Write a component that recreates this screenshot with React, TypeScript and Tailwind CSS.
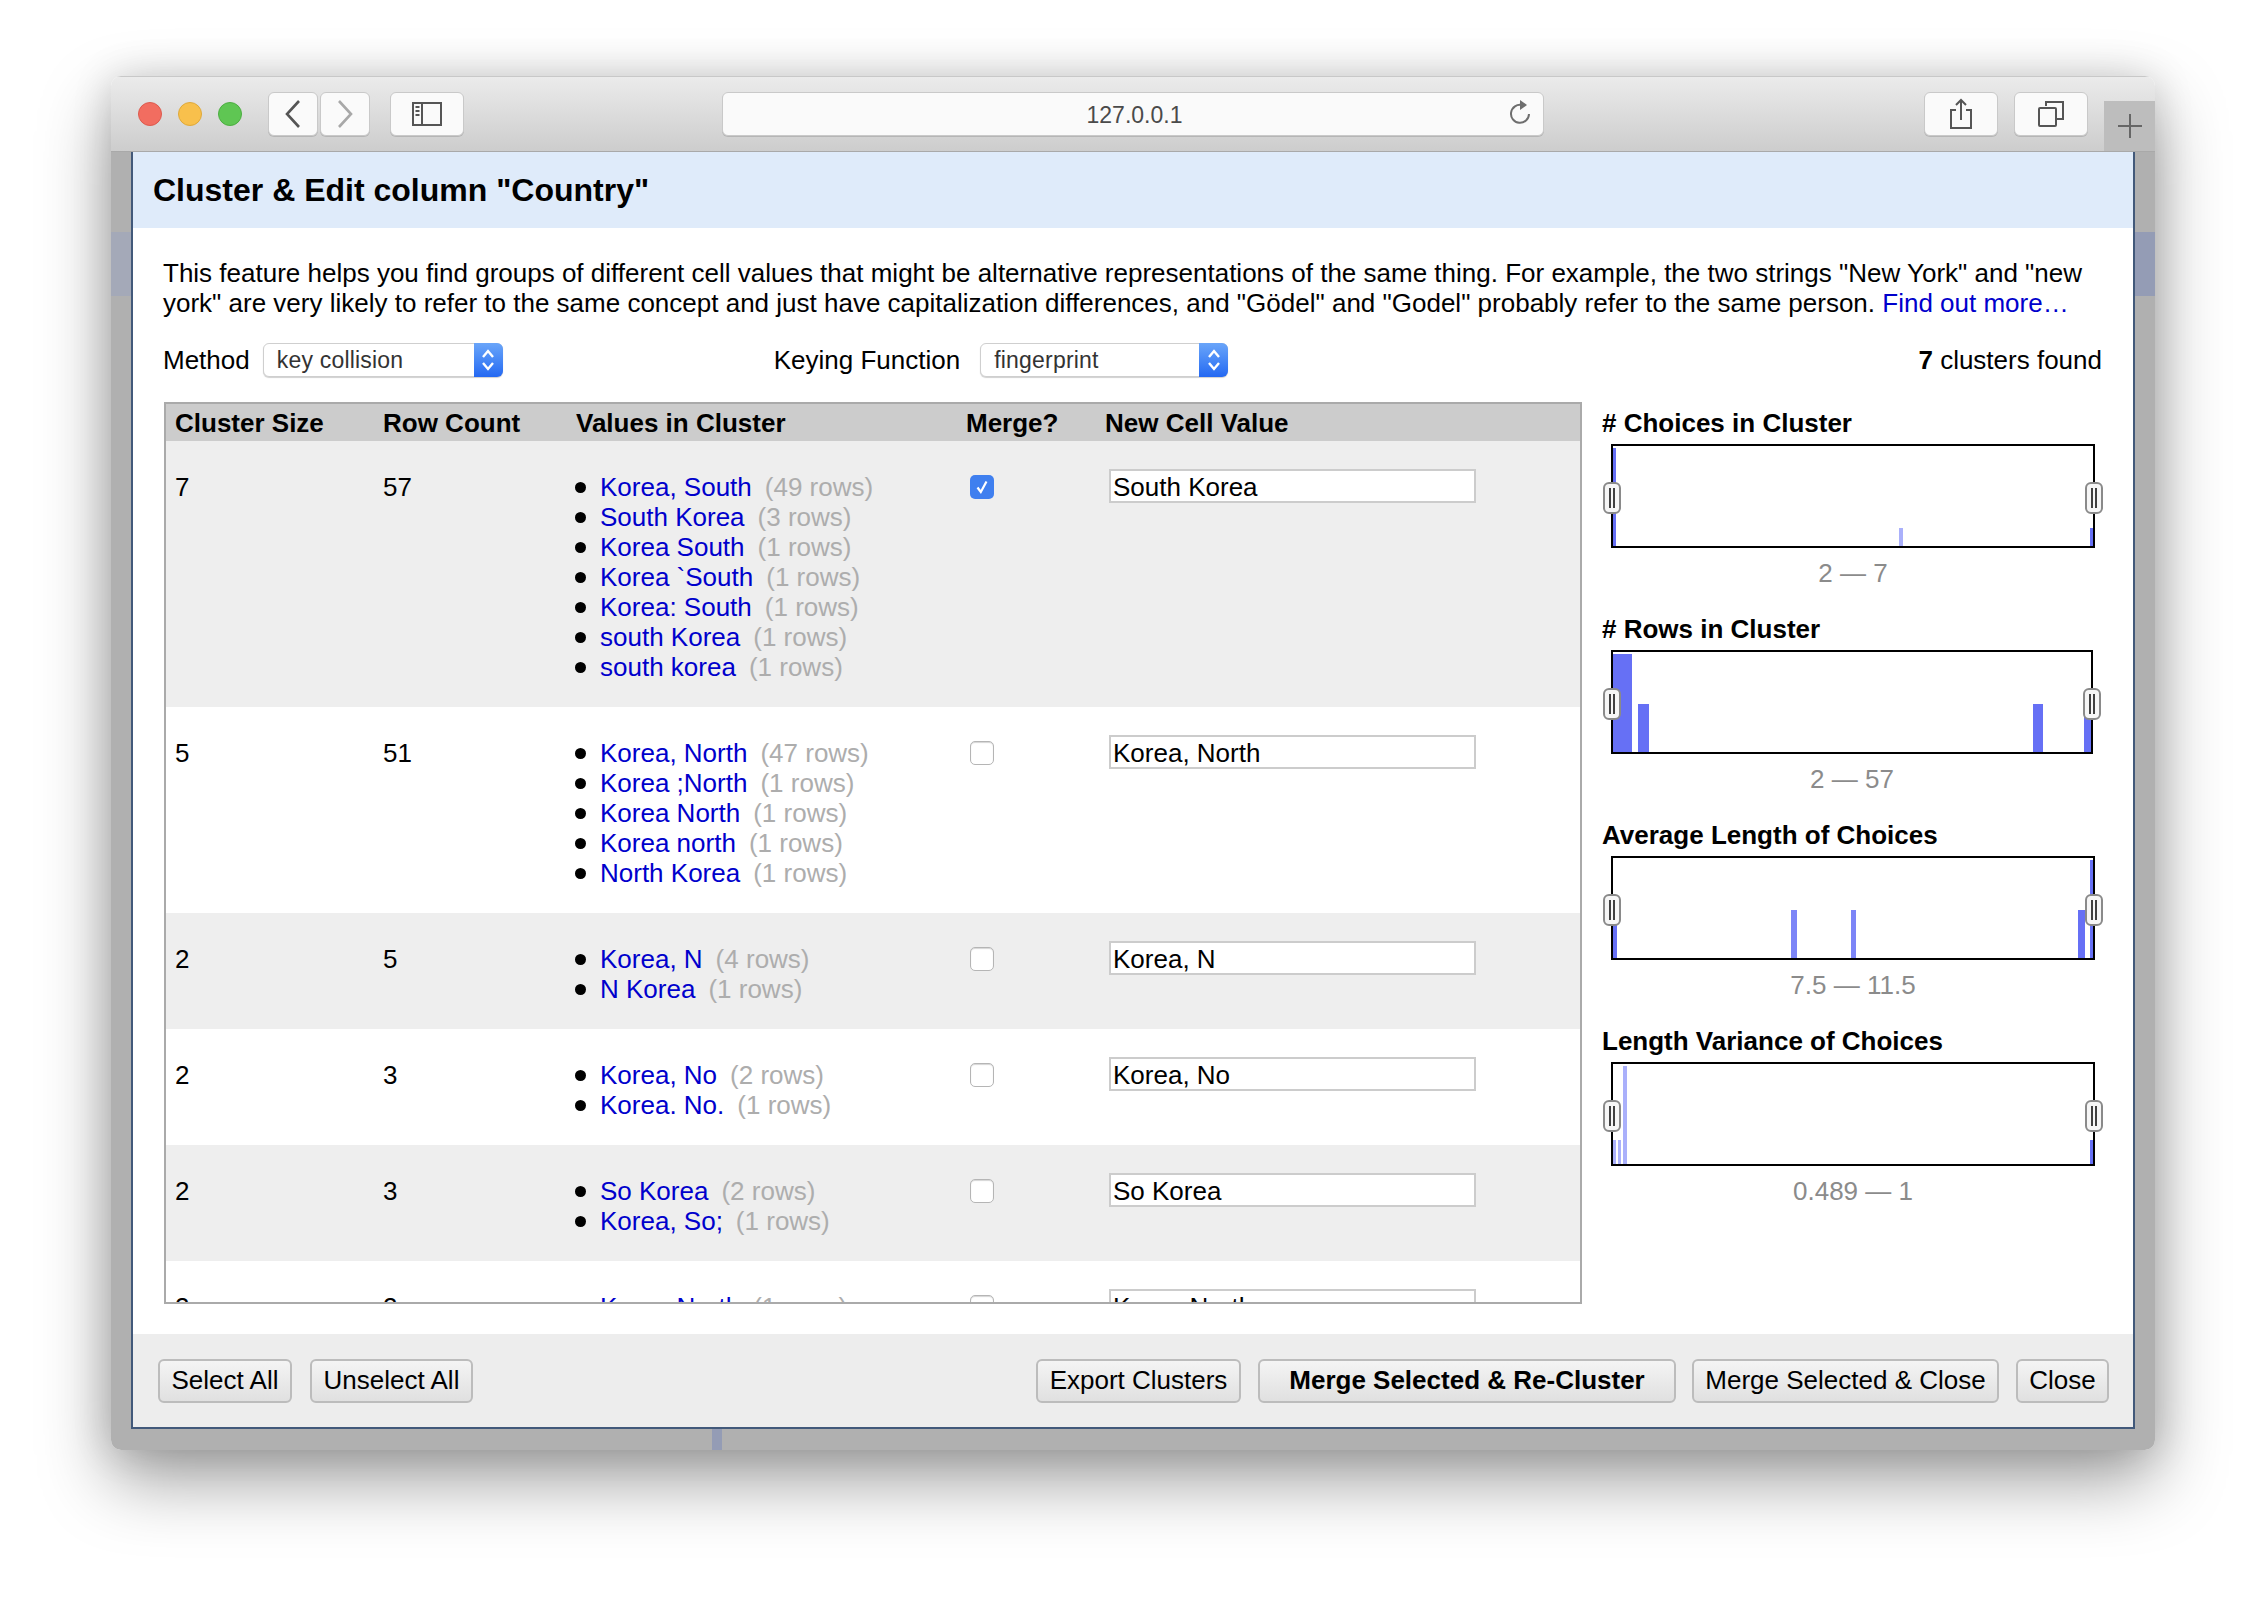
import React from 'react';

const FONT = { fontFamily: '"Liberation Sans", Arial, sans-serif' };

const clusters = [
  {
    size: 7, rows: 57, checked: true, value: 'South Korea',
    items: [['Korea, South', 49], ['South Korea', 3], ['Korea South', 1], ['Korea `South', 1], ['Korea: South', 1], ['south Korea', 1], ['south korea', 1]],
  },
  {
    size: 5, rows: 51, checked: false, value: 'Korea, North',
    items: [['Korea, North', 47], ['Korea ;North', 1], ['Korea North', 1], ['Korea north', 1], ['North Korea', 1]],
  },
  { size: 2, rows: 5, checked: false, value: 'Korea, N', items: [['Korea, N', 4], ['N Korea', 1]] },
  { size: 2, rows: 3, checked: false, value: 'Korea, No', items: [['Korea, No', 2], ['Korea. No.', 1]] },
  { size: 2, rows: 3, checked: false, value: 'So Korea', items: [['So Korea', 2], ['Korea, So;', 1]] },
  { size: 2, rows: 2, checked: false, value: 'Korea North', items: [['Korea North', 1], ['Korea, North.', 1]] },
];

// [x, y, w, h, colour] in the inner box coordinates of a chart
const DARK = '#6670f5';
const MID = '#7c85f7';
const LIGHT = '#aab0fb';

const charts = [
  { title: '# Choices in Cluster', range: '2 — 7', width: 484, bars: [[0, 2, 3, 98, DARK], [286, 82, 4, 18, LIGHT], [477, 82, 3, 18, DARK]] },
  { title: '# Rows in Cluster', range: '2 — 57', width: 482, bars: [[0, 2, 19, 98, DARK], [25, 52, 11, 48, DARK], [420, 52, 10, 48, DARK], [471, 52, 7, 48, DARK]] },
  { title: 'Average Length of Choices', range: '7.5 — 11.5', width: 484, bars: [[0, 52, 4, 48, DARK], [178, 52, 6, 48, MID], [238, 52, 5, 48, MID], [465, 52, 7, 48, DARK], [477, 2, 3, 98, DARK]] },
  { title: 'Length Variance of Choices', range: '0.489 — 1', width: 484, bars: [[0, 76, 3, 24, LIGHT], [5, 76, 3, 24, LIGHT], [10, 2, 4, 98, LIGHT], [477, 76, 3, 24, DARK]] },
];

const ToolButton = ({ className, children }: { className: string; children?: React.ReactNode }) => (
  <div className={`h-[44px] flex items-center justify-center rounded-[6px] bg-[#fafafa] border border-[#c9c9c9] shadow-[0_1px_0_#b5b5b5] ${className}`}>
    {children}
  </div>
);

const Handle = ({ className }: { className: string }) => (
  <div className={`absolute top-[36px] w-[18px] h-[32px] rounded-[6px] border-2 border-[#8a8a8a] bg-[#f6f6f6] flex items-center justify-center gap-[2px] ${className}`}>
    <div className="w-[2px] h-[20px] bg-[#404040]" />
    <div className="w-[2px] h-[20px] bg-[#404040]" />
  </div>
);

const Chart = ({ title, range, width, bars }: (typeof charts)[number]) => (
  <div className="h-[206px] pt-[6px]">
    <div className="h-[30px] leading-[30px] text-[26px] font-bold text-black whitespace-nowrap">{title}</div>
    <div className="relative mt-[6px] ml-[9px] h-[104px] border-2 border-black bg-white" style={{ width }}>
      <svg width={width - 4} height={100} className="block">
        {bars.map(([x, y, w, h, c], i) => (
          <rect key={i} x={x as number} y={y as number} width={w as number} height={h as number} fill={c as string} />
        ))}
      </svg>
      <Handle className="-left-[10px]" />
      <Handle className="-right-[10px]" />
    </div>
    <div className="mt-[10px] ml-[9px] text-center text-[26px] leading-[30px] text-[#8b8b8b]" style={{ width }}>{range}</div>
  </div>
);

const SelectBox = ({ label, className }: { label: string; className: string }) => (
  <div className={`h-[34px] flex items-stretch rounded-[6px] bg-white border border-[#cfcfcf] shadow-[0_1px_1px_#d0d0d0] ${className}`}>
    <div className="flex-1 pl-[13px] text-[23px] leading-[32px] text-[#333333] tracking-[0.2px]">{label}</div>
    <div className="w-[29px] -my-px -mr-px rounded-r-[6px] bg-gradient-to-b from-[#6aa5f9] to-[#2468f2] flex items-center justify-center">
      <svg width="14" height="26" viewBox="0 0 14 26" fill="none" stroke="white" strokeWidth="2.4">
        <path d="M2 10 L7 4 L12 10" />
        <path d="M2 16 L7 22 L12 16" />
      </svg>
    </div>
  </div>
);

const FooterButton = ({ label, className }: { label: string; className: string }) => (
  <div className={`h-[44px] flex items-center justify-center rounded-[6px] border-2 border-[#bcbcbc] bg-gradient-to-b from-[#f4f4f4] to-[#e0e0e0] text-[26px] text-black whitespace-nowrap ${className}`}>
    {label}
  </div>
);

const CheckBox = ({ checked }: { checked: boolean }) =>
  checked ? (
    <div className="w-[24px] h-[24px] rounded-[5px] bg-[#3f7fef] flex items-center justify-center">
      <svg width="16" height="16" viewBox="0 0 16 16" fill="none" stroke="white" strokeWidth="2.2">
        <path d="M3.5 8.5 L6.8 13 L12.5 2.5" />
      </svg>
    </div>
  ) : (
    <div className="w-[24px] h-[24px] rounded-[5px] bg-white border border-[#b5b5b5] shadow-[inset_0_1px_1px_#d5d5d5]" />
  );

export default function App() {
  return (
    <div className="w-[2266px] h-[1598px] bg-white pl-[111px] pt-[76px] overflow-hidden" style={FONT}>
      <div className="relative w-[2044px] h-[1374px] flex flex-col rounded-[10px] overflow-hidden shadow-[0_30px_70px_rgba(0,0,0,0.38),0_0_40px_rgba(0,0,0,0.14)]">
        {/* Safari toolbar */}
        <div className="relative h-[76px] shrink-0 flex items-center pl-[27px] bg-gradient-to-b from-[#ebebeb] to-[#cdcdcd] border-t border-[#c8c8c8] border-b border-b-[#a9a9a9]">
          <div className="w-[24px] h-[24px] rounded-full bg-[#f26d60] border border-[#dd5a4e]" />
          <div className="ml-[16px] w-[24px] h-[24px] rounded-full bg-[#f8c04c] border border-[#dfa93a]" />
          <div className="ml-[16px] w-[24px] h-[24px] rounded-full bg-[#5fc653] border border-[#4cae41]" />
          <ToolButton className="ml-[26px] w-[50px]">
            <svg width="18" height="32" viewBox="0 0 18 32" fill="none" stroke="#555" strokeWidth="2.6"><path d="M15 3 L3 16 L15 29" /></svg>
          </ToolButton>
          <ToolButton className="ml-[2px] w-[50px]">
            <svg width="18" height="32" viewBox="0 0 18 32" fill="none" stroke="#a8a8a8" strokeWidth="2.6"><path d="M3 3 L15 16 L3 29" /></svg>
          </ToolButton>
          <ToolButton className="ml-[20px] w-[74px]">
            <svg width="30" height="24" viewBox="0 0 30 24" fill="none" stroke="#555" strokeWidth="2">
              <rect x="1" y="1" width="28" height="22" />
              <path d="M10 1 V23" />
              <path d="M3.5 5 H7.5 M3.5 9 H7.5 M3.5 13 H7.5" />
            </svg>
          </ToolButton>
          <div className="relative ml-[258px] w-[822px] h-[44px] rounded-[6px] bg-[#fafafa] border border-[#c9c9c9] shadow-[0_1px_0_#b5b5b5] flex items-center justify-center pl-[3px] pt-[2px] text-[23px] text-[#4a4a4a]">
            127.0.0.1
            <svg className="absolute right-[11px] top-[6px]" width="24" height="28" viewBox="0 0 24 28" fill="none" stroke="#6e6e6e" strokeWidth="2">
              <path d="M14 6 A9 9 0 1 0 21 15" />
              <path d="M12 1 L19 6 L12 11 Z" fill="#6e6e6e" stroke="none" />
            </svg>
          </div>
          <ToolButton className="ml-[380px] w-[74px]">
            <svg width="24" height="32" viewBox="0 0 24 32" fill="none" stroke="#555" strokeWidth="2">
              <path d="M7 12 H2 V30 H22 V12 H17" />
              <path d="M12 22 V2 M7 7 L12 2 L17 7" />
            </svg>
          </ToolButton>
          <ToolButton className="ml-[16px] w-[74px]">
            <svg width="26" height="26" viewBox="0 0 26 26" fill="none" stroke="#555" strokeWidth="2">
              <path d="M8 5 V1 H25 V18 H19" />
              <rect x="1" y="7" width="17" height="18" rx="1" />
            </svg>
          </ToolButton>
          <div className="absolute right-0 bottom-0 w-[51px] h-[50px] bg-[#bdbdbd] flex items-center justify-center">
            <svg width="24" height="24" viewBox="0 0 24 24" stroke="#666" strokeWidth="2"><path d="M12 0 V24 M0 12 H24" /></svg>
          </div>
        </div>

        {/* page behind the dialog */}
        <div className="relative flex-1 min-h-0 bg-[#b0b0b0] pl-[20px] pr-[20px] pb-[21px] flex">
          <div className="absolute left-0 top-[80px] w-[20px] h-[64px] bg-[#a4a9b8]" />
          <div className="absolute right-0 top-[80px] w-[20px] h-[64px] bg-[#949cb5]" />
          <div className="absolute left-[601px] bottom-0 w-[10px] h-[21px] bg-[#949cb5]" />

          {/* Cluster dialog */}
          <div className="relative flex-1 min-w-0 flex flex-col bg-white border-x-2 border-b-2 border-[#42597a]">
            <div className="h-[76px] shrink-0 bg-[#dfebfa] pl-[20px] flex items-center text-[32px] font-bold text-black">
              Cluster &amp; Edit column "Country"
            </div>

            <div className="flex-1 min-h-0 flex flex-col pt-[30px] pl-[30px] pr-[31px]">
              <p className="text-[26px] leading-[30px] text-black whitespace-nowrap">
                This feature helps you find groups of different cell values that might be alternative representations of the same thing. For example, the two strings "New York" and "new
                <br />
                york" are very likely to refer to the same concept and just have capitalization differences, and "Gödel" and "Godel" probably refer to the same person.{' '}
                <span className="text-[#0000cc]">Find out more…</span>
              </p>

              <div className="mt-[25px] h-[34px] flex items-center text-[26px] text-black">
                <span>Method</span>
                <SelectBox label="key collision" className="ml-[13px] w-[240px]" />
                <span className="ml-[271px]">Keying Function</span>
                <SelectBox label="fingerprint" className="ml-[20px] w-[248px]" />
                <span className="ml-auto"><b>7</b> clusters found</span>
              </div>

              <div className="mt-[25px] flex min-h-0">
                <div className="ml-[1px] w-[1418px] h-[902px] overflow-hidden border-2 border-[#aaaaaa] shrink-0">
                  <div className="h-[37px] bg-[#cccccc] grid grid-cols-[208px_193px_390px_139px_1fr] pl-[9px] items-center text-[26px] font-bold text-black">
                    <span>Cluster Size</span>
                    <span>Row Count</span>
                    <span>Values in Cluster</span>
                    <span>Merge?</span>
                    <span>New Cell Value</span>
                  </div>
                  {clusters.map((c, i) => (
                    <div
                      key={i}
                      className={`grid grid-cols-[208px_193px_390px_139px_1fr] pl-[9px] pt-[31px] pb-[25px] text-[26px] leading-[30px] text-black ${i % 2 === 0 ? 'bg-[#eeeeee]' : 'bg-white'}`}
                    >
                      <span>{c.size}</span>
                      <span>{c.rows}</span>
                      <ul>
                        {c.items.map(([name, count]) => (
                          <li key={name as string} className="flex items-center whitespace-nowrap">
                            <span className="w-[11px] h-[11px] rounded-full bg-black ml-[-1px] mr-[14px]" />
                            <span className="text-[#0000cc]">{name}</span>
                            <span className="ml-[13px] text-[#adadad]">({count} rows)</span>
                          </li>
                        ))}
                      </ul>
                      <div className="pl-[4px] pt-[3px]"><CheckBox checked={c.checked} /></div>
                      <div className="pl-[4px] -mt-[3px]">
                        <div className="w-[367px] h-[34px] bg-white border-2 border-[#cccccc] pl-[2px] leading-[32px]">{c.value}</div>
                      </div>
                    </div>
                  ))}
                </div>

                <div className="ml-[20px] flex-1 min-w-0">
                  {charts.map((c) => (
                    <Chart key={c.title} {...c} />
                  ))}
                </div>
              </div>
            </div>

            <div className="h-[93px] shrink-0 bg-[#ededed] pl-[25px] pr-[24px] flex items-center">
              <FooterButton label="Select All" className="w-[134px]" />
              <FooterButton label="Unselect All" className="ml-[18px] w-[163px]" />
              <FooterButton label="Export Clusters" className="ml-auto w-[205px]" />
              <FooterButton label="Merge Selected & Re-Cluster" className="ml-[17px] w-[418px] font-bold" />
              <FooterButton label="Merge Selected & Close" className="ml-[16px] w-[307px]" />
              <FooterButton label="Close" className="ml-[17px] w-[93px]" />
            </div>
          </div>
        </div>
      </div>
    </div>
  );
}
